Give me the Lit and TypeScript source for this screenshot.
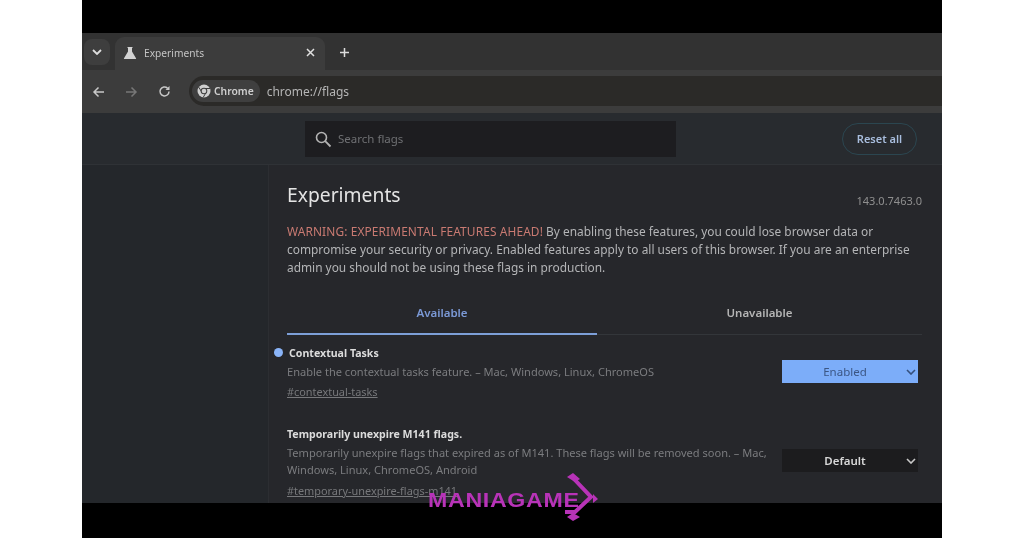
import { LitElement, html, css } from "lit";
import { customElement } from "lit/decorators.js";

const chev = html`<svg class="chev" width="10" height="6" viewBox="0 0 10 6"><path d="M1 1l4 4 4-4" fill="none" stroke="currentColor" stroke-width="1.6"/></svg>`;

@customElement("app-root")
export class AppRoot extends LitElement {
  static styles = css`
    :host { display: block; width: 1024px; height: 538px; background: #fff; position: relative; overflow: hidden;
      font-family: "Noto Sans", "Open Sans", sans-serif; }
    .frame { width: 860px; height: 538px; margin-left: 82px; background: #000; padding: 33px 0 35px; box-sizing: border-box; }
    .win { height: 470px; display: flex; flex-direction: column; overflow: hidden; background: #25272b; filter: blur(0.45px); }
    .tabs { height: 37px; flex: none; background: #323232; display: flex; align-items: flex-end; position: relative; }
    .tablist { width: 26px; height: 26px; margin: 0 5px 5px 2px; background: #3e3e3e; border-radius: 8px; color: #ddd; display: flex; align-items: center; justify-content: center; }
    .tab { width: 210px; height: 33px; background: #3c3c3c; border-radius: 9px 9px 0 0; display: flex; align-items: center; padding: 0 10px 2px 8px; box-sizing: border-box; gap: 7px; color: #c4c4c4; font-size: 10.2px; }
    .tab .t { flex: 1; }
    .x { color: #e0e0e0; display: flex; }
    .plus { color: #ddd; margin: 0 0 12px 14px; display: flex; }
    .toolbar { height: 43px; flex: none; background: #3c3c3c; display: flex; align-items: center; padding-left: 10px; box-sizing: border-box; }
    .nav { width: 33px; display: flex; color: #c8c8c8; }
    .nav.dim { color: #777; }
    .omni { flex: 1; height: 30px; margin-left: -2px; background: #2b2a28; border-radius: 15px 0 0 15px; display: flex; align-items: center; padding-left: 3px; gap: 7px; margin-top: -1px; }
    .chip { height: 22px; background: #3f3f3f; border-radius: 11px; display: flex; align-items: center; gap: 3px; padding: 0 6px 0 5px; color: #cfcfcf; font-size: 10.3px; font-weight: 600; }
    .url { color: #b5b5b5; font-size: 12px; }
    .head { height: 52px; flex: none; display: flex; align-items: center; justify-content: space-between; padding: 0 25px 0 223px; border-bottom: 1px solid #2f3236; box-sizing: border-box; background: #282b2f; }
    .search { width: 371px; height: 36px; background: #1d1d20; display: flex; align-items: center; gap: 6px; padding-left: 9px; box-sizing: border-box; color: #6f7073; font-size: 11.5px; }
    .search svg { color: #b4b4b4; }
    .reset { width: 75px; height: 32px; border: 1px solid #2b4650; border-radius: 16px; box-sizing: border-box; color: #a9bede; font-size: 11px; font-weight: 600; display: flex; align-items: center; justify-content: center; }
    .body { flex: 1; display: flex; min-height: 0; }
    .side { width: 186px; flex: none; background: #24272b; }
    .main { flex: 1; background: #26272b; padding: 0 20px 0 18px; box-sizing: border-box; border-left: 1px solid #2c2e32; position: relative; min-width: 0; }
    .titlerow { display: flex; justify-content: space-between; height: 57px; }
    h1 { margin: 15px 0 0; font-size: 19.3px; font-weight: 400; color: #e4e4e4; line-height: 30px; }
    .ver { color: #8f8f8f; font-size: 11px; margin-top: 29px; line-height: 14px; }
    .warn { margin: 0; color: #b4b5b7; font-size: 11.9px; line-height: 18px; width: 636px; }
    .warn b { color: #c97a72; font-weight: 400; letter-spacing: 0.12px; }
    .tabbar { display: flex; margin-top: 21px; border-bottom: 1px solid #33363a; height: 38px; box-sizing: border-box; }
    .tb { font-size: 11.5px; font-weight: 600; display: flex; align-items: center; justify-content: center; height: 38px; box-sizing: border-box; padding-bottom: 6px; border-bottom: 2px solid transparent; color: #b5b5b5; flex: 1; }
    .tb.on { flex: none; width: 310px; color: #7b99d6; border-bottom-color: #7d9fd8; }
    .exp { display: grid; grid-template-columns: 1fr 136px; column-gap: 10px; padding-right: 4px; position: relative; }
    .exp.a { margin-top: 9px; }
    .exp.b { margin-top: 25px; }
    .name { color: #dcdcdc; font-size: 10.6px; font-weight: 700; line-height: 18px; }
    .name.in { padding-left: 2px; }
    .desc { color: #7b7c7f; font-size: 11.05px; line-height: 17px; margin-top: 1px; }
    .link { color: #77787b; font-size: 10.9px; line-height: 17px; margin-top: 3px; text-decoration: underline; }
    .b .link { margin-top: 4px; }
    .dot { position: absolute; left: -13px; top: 4px; width: 9px; height: 9px; border-radius: 50%; background: #8ab4f8; }
    .sel { height: 23px; display: flex; align-items: center; justify-content: center; padding-right: 10px; position: relative; font-size: 11.5px; box-sizing: border-box; align-self: start; }
    .a .sel { margin-top: 16px; background: #7cadf9; color: #3b5684; }
    .b .sel { margin-top: 24px; background: #1c1c1e; color: #d8d8d8; font-weight: 600; }
    .sel .chev { position: absolute; right: 2px; top: 9px; }
    .a .sel .chev { color: #35507c; }
    .b .sel .chev { color: #c8c8c8; }
    .logo { position: absolute; left: 428px; top: 468px; width: 172px; height: 58px; color: #b833b8; }
    .logo span { position: absolute; left: 0; top: 21px; font-family: "Liberation Sans", sans-serif; font-weight: 700; font-size: 20.5px; line-height: 22px; letter-spacing: 0.6px; transform: scaleX(1.13); transform-origin: left center; }
    .logo svg { position: absolute; left: 0; top: 0; }
  `;

  render() {
    return html`
      <div class="frame"><div class="win">
        <div class="tabs">
          <div class="tablist"><svg width="10" height="6" viewBox="0 0 10 6"><path d="M1 1l4 4 4-4" fill="none" stroke="currentColor" stroke-width="1.8"/></svg></div>
          <div class="tab">
            <svg width="14" height="14" viewBox="0 0 14 14"><path d="M4.500 1h5v1H9v3.600l4 6.600c.3.500 0 .8-.5.8h-11c-.5 0-.8-.3-.5-.8l4-6.600V2h-.5z" fill="#d2d2d2"/></svg>
            <span class="t">Experiments</span>
            <span class="x"><svg width="9" height="9" viewBox="0 0 9 9"><path d="M1 1l7 7M8 1L1 8" stroke="currentColor" stroke-width="1.500"/></svg></span>
          </div>
          <span class="plus"><svg width="11" height="11" viewBox="0 0 11 11"><path d="M5.500 1v9M1 5.500h9" stroke="currentColor" stroke-width="1.500"/></svg></span>
        </div>
        <div class="toolbar">
          <span class="nav"><svg width="13" height="12" viewBox="0 0 13 12"><path d="M12 6H2M6.500 1.500L2 6l4.500 4.500" fill="none" stroke="currentColor" stroke-width="1.500"/></svg></span>
          <span class="nav dim"><svg width="13" height="12" viewBox="0 0 13 12"><path d="M1 6h10M6.500 1.500L11 6l-4.500 4.500" fill="none" stroke="currentColor" stroke-width="1.500"/></svg></span>
          <span class="nav"><svg width="13" height="13" viewBox="0 0 13 13"><path d="M11 6.500A4.500 4.500 0 1 1 9.500 3.100" fill="none" stroke="currentColor" stroke-width="1.500"/><path d="M11.500 1v4h-4z" fill="currentColor"/></svg></span>
          <div class="omni">
            <div class="chip">
              <svg width="14" height="14" viewBox="0 0 14 14"><circle cx="7" cy="7" r="6.500" fill="#d0d0d0"/><path d="M7 4.500H13M4.800 8.300L1.800 3.200M9.200 8.300L6.200 13.400" stroke="#3f3f3f" stroke-width="1"/><circle cx="7" cy="7" r="3.300" fill="#3f3f3f"/><circle cx="7" cy="7" r="2.300" fill="#d0d0d0"/></svg>
              <span>Chrome</span>
            </div>
            <span class="url">chrome://flags</span>
          </div>
        </div>
        <div class="head">
          <div class="search">
            <svg width="18" height="18" viewBox="0 0 18 18"><circle cx="7.500" cy="7.500" r="5" fill="none" stroke="currentColor" stroke-width="1.600"/><path d="M11.200 11.200L16.500 16.500" stroke="currentColor" stroke-width="1.800"/></svg>
            <span>Search flags</span>
          </div>
          <div class="reset">Reset all</div>
        </div>
        <div class="body">
          <div class="side"></div>
          <div class="main">
            <div class="titlerow"><h1>Experiments</h1><span class="ver">143.0.7463.0</span></div>
            <p class="warn"><b>WARNING: EXPERIMENTAL FEATURES AHEAD!</b> By enabling these features, you could lose browser data or compromise your security or privacy. Enabled features apply to all users of this browser. If you are an enterprise admin you should not be using these flags in production.</p>
            <div class="tabbar"><div class="tb on">Available</div><div class="tb">Unavailable</div></div>
            <div class="exp a">
              <div>
                <span class="dot"></span>
                <div class="name in">Contextual Tasks</div>
                <div class="desc">Enable the contextual tasks feature. – Mac, Windows, Linux, ChromeOS</div>
                <div class="link">#contextual-tasks</div>
              </div>
              <div class="sel">Enabled ${chev}</div>
            </div>
            <div class="exp b">
              <div>
                <div class="name">Temporarily unexpire M141 flags.</div>
                <div class="desc">Temporarily unexpire flags that expired as of M141. These flags will be removed soon. – Mac, Windows, Linux, ChromeOS, Android</div>
                <div class="link">#temporary-unexpire-flags-m141</div>
              </div>
              <div class="sel">Default ${chev}</div>
            </div>
          </div>
        </div>
      </div></div>
      <div class="logo">
        <span>MANIAGAME</span>
        <svg width="172" height="58" viewBox="0 0 172 58"><path d="M139 9l6-4 7 6-5 3zM139 49l6-4 7 4-7 4zM165 26l5 5-5 4z" fill="currentColor"/><path d="M146 11l17 18-16 15h-10" fill="none" stroke="currentColor" stroke-width="4"/></svg>
      </div>
    `;
  }
}
